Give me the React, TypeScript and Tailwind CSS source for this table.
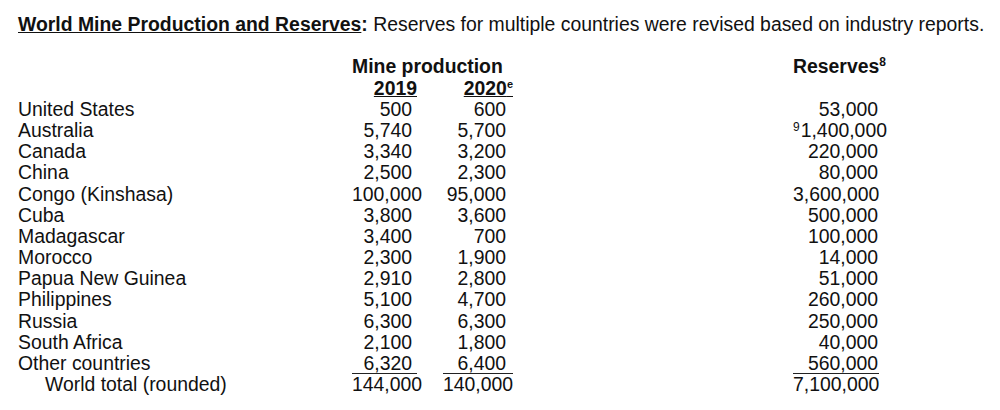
import React from "react";

type Row = { name: string; a: string; b: string; r: string; sup?: string };

const rows: Row[] = [
  { name: "United States", a: "500", b: "600", r: "53,000" },
  { name: "Australia", a: "5,740", b: "5,700", r: "1,400,000", sup: "9" },
  { name: "Canada", a: "3,340", b: "3,200", r: "220,000" },
  { name: "China", a: "2,500", b: "2,300", r: "80,000" },
  { name: "Congo (Kinshasa)", a: "100,000", b: "95,000", r: "3,600,000" },
  { name: "Cuba", a: "3,800", b: "3,600", r: "500,000" },
  { name: "Madagascar", a: "3,400", b: "700", r: "100,000" },
  { name: "Morocco", a: "2,300", b: "1,900", r: "14,000" },
  { name: "Papua New Guinea", a: "2,910", b: "2,800", r: "51,000" },
  { name: "Philippines", a: "5,100", b: "4,700", r: "260,000" },
  { name: "Russia", a: "6,300", b: "6,300", r: "250,000" },
  { name: "South Africa", a: "2,100", b: "1,800", r: "40,000" },
];

function DataRow({ row, line, indent }: { row: Row; line?: boolean; indent?: boolean }) {
  const ul = line ? "shadow-[inset_0_-1px_0_#222]" : "";
  return (
    <div className="flex h-[21.2px] leading-[21.2px] whitespace-nowrap">
      <div className={`w-[334px] ${indent ? "pl-[27px]" : ""}`}>{row.name}</div>
      <div className={`w-[65px] text-right pr-[5px] ${ul}`}>{row.a}</div>
      <div className="w-[26px]" />
      <div className={`w-[70px] text-right pr-[7px] ${ul}`}>{row.b}</div>
      <div className="w-[280px]" />
      <div className={`w-[86px] text-right pr-[1px] ${ul}`}>
        {row.sup && <span className="relative top-[-6px] text-[12px] mr-[1px]">{row.sup}</span>}
        {row.r}
      </div>
    </div>
  );
}

export default function App() {
  return (
    <div className="w-[1000px] h-[410px] bg-white text-[#111] pl-[18px] pt-[14px] text-[19.4px] leading-[21.2px] overflow-hidden"
      style={{ fontFamily: '"Liberation Sans", Arial, sans-serif' }}>
      <div className="whitespace-nowrap h-[21.2px]">
        <span className="font-bold underline">World Mine Production and Reserves</span>
        <span className="font-bold">:</span> Reserves for multiple countries were revised based on industry reports.
      </div>
      <div className="h-[21.2px]" />
      <div className="flex h-[21.2px] font-bold whitespace-nowrap">
        <div className="w-[334px]" />
        <div className="w-[441px]">Mine production</div>
        <div className="w-[86px] text-right">
          Reserves<span className="relative top-[-7px] text-[12px]">8</span>
        </div>
      </div>
      <div className="flex h-[21.2px] font-bold whitespace-nowrap">
        <div className="w-[334px]" />
        <div className="w-[65px] text-right"><span className="underline">2019</span></div>
        <div className="w-[26px]" />
        <div className="w-[70px] text-right">
          <span className="underline">2020<span className="relative top-[-7px] text-[11px]">e</span></span>
        </div>
      </div>
      {rows.map((r) => (
        <DataRow key={r.name} row={r} />
      ))}
      <DataRow row={{ name: "Other countries", a: "6,320", b: "6,400", r: "560,000" }} line />
      <DataRow row={{ name: "World total (rounded)", a: "144,000", b: "140,000", r: "7,100,000" }} indent />
    </div>
  );
}
